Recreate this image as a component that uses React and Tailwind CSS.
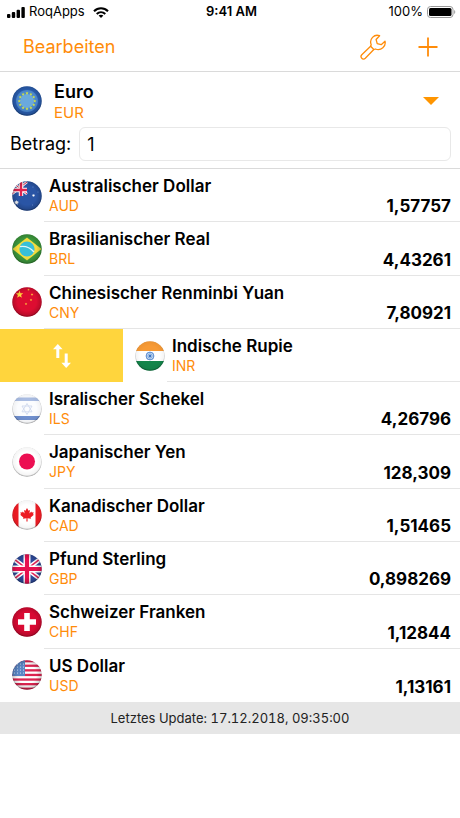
import React from "react";

const currencies = [
  { code: "AUD", name: "Australischer Dollar", rate: "1,57757" },
  { code: "BRL", name: "Brasilianischer Real", rate: "4,43261" },
  { code: "CNY", name: "Chinesischer Renminbi Yuan", rate: "7,80921" },
  { code: "INR", name: "Indische Rupie", swiped: true },
  { code: "ILS", name: "Isralischer Schekel", rate: "4,26796" },
  { code: "JPY", name: "Japanischer Yen", rate: "128,309" },
  { code: "CAD", name: "Kanadischer Dollar", rate: "1,51465" },
  { code: "GBP", name: "Pfund Sterling", rate: "0,898269" },
  { code: "CHF", name: "Schweizer Franken", rate: "1,12844" },
  { code: "USD", name: "US Dollar", rate: "1,13161" },
];

const starPath = (cx, cy, r, points = 5) => {
  let d = "";
  for (let i = 0; i < points * 2; i++) {
    const radius = i % 2 ? r * 0.42 : r;
    const a = (Math.PI * i) / points - Math.PI / 2;
    const x = (cx + radius * Math.cos(a)).toFixed(2);
    const y = (cy + radius * Math.sin(a)).toFixed(2);
    d += `${i ? "L" : "M"}${x} ${y}`;
  }
  return d + "Z";
};

const flagArt = {
  EUR: (
    <>
      <rect width="30" height="30" fill="#2a5fb2" />
      <circle cx="15" cy="15" r="11" fill="#4a86cc" />
      <circle cx="15" cy="15" r="7" fill="#6aa9dd" />
      {Array.from({ length: 12 }, (_, i) => (
        <path
          key={i}
          d={starPath(
            15 + 7.8 * Math.sin((i * Math.PI) / 6),
            15 - 7.8 * Math.cos((i * Math.PI) / 6),
            1.7
          )}
          fill="#d9e63c"
        />
      ))}
    </>
  ),
  AUD: (
    <>
      <rect width="30" height="30" fill="#2a55a5" />
      <path d="M0 1L15 13M15 1L0 13" stroke="#fff" strokeWidth="2.6" />
      <path d="M0 1L15 13M15 1L0 13" stroke="#e0244f" strokeWidth="1" />
      <path d="M9 0V15M0 9H15" stroke="#fff" strokeWidth="4.4" />
      <path d="M9 0V15M0 9H15" stroke="#e0244f" strokeWidth="2.4" />
      <path d={starPath(4.5, 21.5, 2.8, 7)} fill="#fff" />
      <path d={starPath(21.5, 14.5, 1.7, 7)} fill="#fff" />
      <path d={starPath(21, 6, 0.8, 7)} fill="#7f9fdb" />
      <path d={starPath(26, 11, 0.8, 7)} fill="#7f9fdb" />
      <path d={starPath(20.5, 24, 0.8, 7)} fill="#7f9fdb" />
    </>
  ),
  BRL: (
    <>
      <rect width="30" height="30" fill="#3d9a3d" />
      <path d="M.5 15L15 3.5L29.5 15L15 26.5Z" fill="#f4dc3e" />
      <circle cx="15" cy="15" r="7.6" fill="#38bfd8" />
      <path d="M8 12.6C13 11.8 18.5 14 22 18" stroke="#dff6fa" strokeWidth="1.4" fill="none" />
    </>
  ),
  CNY: (
    <>
      <rect width="30" height="30" fill="#dd0d31" />
      <path d={starPath(7.5, 7.5, 4)} fill="#ffd83a" />
      <path d={starPath(16.5, 2.8, 1.3)} fill="#ffc13a" />
      <path d={starPath(20, 7.5, 1.4)} fill="#ffc13a" />
      <path d={starPath(19, 13, 1.4)} fill="#ffc13a" />
      <path d={starPath(14, 17, 1.4)} fill="#ffc13a" />
    </>
  ),
  INR: (
    <>
      <rect width="30" height="30" fill="#fff" />
      <rect width="30" height="10" fill="#f79a35" />
      <rect y="20" width="30" height="10" fill="#13854a" />
      <circle cx="15" cy="15" r="3.9" fill="#c8dcf3" stroke="#5f8fd0" strokeWidth="1" />
      <path
        d="M15 11V19M11 15H19M12.2 12.2L17.8 17.8M17.8 12.2L12.2 17.8"
        stroke="#5f8fd0"
        strokeWidth=".6"
      />
      <circle cx="15" cy="15" r="1.2" fill="#3d73bf" />
    </>
  ),
  ILS: (
    <>
      <rect width="30" height="30" fill="#fbfcfe" />
      <rect y="3.5" width="30" height="3.5" fill="#a9bce2" />
      <rect y="22" width="30" height="4" fill="#6f8fce" />
      <path
        d="M15 20.5L10 12H20ZM15 9.5L20 17.8H10Z"
        fill="none"
        stroke="#d3dcef"
        strokeWidth="1"
      />
    </>
  ),
  JPY: (
    <>
      <rect width="30" height="30" fill="#fff" />
      <circle cx="15" cy="14.5" r="8" fill="#ec0f52" />
    </>
  ),
  CAD: (
    <>
      <rect width="30" height="30" fill="#fff" />
      <rect width="6.5" height="30" fill="#ec1c24" />
      <rect x="23.5" width="6.5" height="30" fill="#ec1c24" />
      <path
        d="M15 8l1.500 2.700 1.500-.8-.6 3.500 1.900-1.900.5 1 1.900-.3-.7 2 .9.5-3.300 2.800.4 1.300-3.500-.5.1 3.200h-1.200l.1-3.200-3.500.5.400-1.300-3.300-2.800.9-.5-.7-2 1.900.3.500-1 1.900 1.900-.6-3.500 1.500.8z"
        fill="#ec1c24"
      />
    </>
  ),
  GBP: (
    <>
      <rect width="30" height="30" fill="#2d4a9c" />
      <path d="M-2 2L32 28M32 2L-2 28" stroke="#fff" strokeWidth="4.6" />
      <path d="M-2 2L32 28M32 2L-2 28" stroke="#e2265a" strokeWidth="1.6" />
      <path d="M15 0V30M0 15H30" stroke="#fff" strokeWidth="7" />
      <path d="M15 0V30M0 15H30" stroke="#e5104f" strokeWidth="4.2" />
    </>
  ),
  CHF: (
    <>
      <rect width="30" height="30" fill="#d90a33" />
      <path d="M15 6V24M6 15H24" stroke="#fff" strokeWidth="5.6" />
    </>
  ),
  USD: (
    <>
      <rect width="30" height="30" fill="#fff" />
      {[0, 1, 2, 3, 4, 5, 6].map((i) => (
        <rect key={i} y={i * 4.6} width="30" height="2.3" fill="#dc2450" />
      ))}
      <rect width="13" height="16" fill="#5b86c4" />
      {[3, 6, 9, 12].map((y) =>
        [2.5, 5.5, 8.5, 11.5].map((x) => (
          <circle key={`${x}-${y}`} cx={x} cy={y + 1} r=".6" fill="#dbe6f5" />
        ))
      )}
    </>
  ),
};

const lightFlags = ["ILS", "JPY", "CAD", "INR"];

const Flag = ({ code }) => {
  const light = lightFlags.includes(code);

  return (
    <svg className="h-[30px] w-[30px] shrink-0" viewBox="0 0 30 30" aria-hidden="true">
      <defs>
        <clipPath id={`clip-${code}`}>
          <circle cx="15" cy="15" r="14.7" />
        </clipPath>
        <radialGradient id={`shade-${code}`} cx=".5" cy=".48" r=".52">
          <stop offset=".6" stopColor="#000" stopOpacity="0" />
          <stop offset=".88" stopColor="#000" stopOpacity={light ? 0.04 : 0.15} />
          <stop offset="1" stopColor="#000" stopOpacity={light ? 0.45 : 0.5} />
        </radialGradient>
      </defs>
      <g clipPath={`url(#clip-${code})`}>
        {flagArt[code]}
        <circle cx="15" cy="15" r="15" fill={`url(#shade-${code})`} />
      </g>
    </svg>
  );
};

const StatusBar = () => (
  <div className="grid h-6 grid-cols-3 items-center pl-[7px] pr-1 text-[13px]">
    <div className="flex items-center gap-1">
      <svg className="h-[11px] w-[18px]" viewBox="0 0 18 11" aria-hidden="true">
        <rect y="7" width="3.4" height="4" rx="1" />
        <rect x="4.8" y="5" width="3.4" height="6" rx="1" />
        <rect x="9.6" y="2.7" width="3.4" height="8.3" rx="1" />
        <rect x="14.4" width="3.4" height="11" rx="1" />
      </svg>
      <span>RoqApps</span>
      <svg className="ml-1 h-[11px] w-4" viewBox="0 0 16 11" aria-hidden="true">
        <path d="M1 4.2C5 .3 11 .3 15 4.2" fill="none" stroke="#000" strokeWidth="2.1" />
        <path d="M3.7 7C6.2 4.6 9.800 4.600 12.300 7" fill="none" stroke="#000" strokeWidth="2" />
        <path d="M8 11L5.6 8.6C7 7.3 9 7.3 10.4 8.6Z" />
      </svg>
    </div>
    <span className="text-center font-semibold">9:41 AM</span>
    <div className="flex items-center justify-end gap-1">
      <span>100%</span>
      <svg className="h-3 w-[29px]" viewBox="0 0 29 12" aria-hidden="true">
        <rect x=".5" y=".5" width="25.5" height="11" rx="3" fill="none" stroke="#999" />
        <rect x="2" y="2" width="22.5" height="8" rx="1.5" />
        <path d="M27.2 4C28.6 4.6 28.6 7.4 27.2 8Z" fill="#999" />
      </svg>
    </div>
  </div>
);

const Toolbar = () => (
  <header className="flex h-12 items-center border-b border-[#dadada] pb-px pl-[23px] pr-[22px] text-[#ff8c0a]">
    <button type="button" className="mr-auto text-lg">
      Bearbeiten
    </button>
    <button type="button" aria-label="Einstellungen" className="mr-8">
      <svg
        className="h-[26px] w-[26px]"
        viewBox="0 0 26 26"
        fill="none"
        stroke="currentColor"
        strokeWidth="1.3"
        strokeLinejoin="round"
        strokeLinecap="round"
      >
        <path d="M19.6 1.7C14.2-.2 8.9 5 11.2 10.7L10.6 12.3L1.8 20.7C-.4 23 2.8 26.7 5.3 24.3L13.8 15.5L15.4 15C21.2 17.2 26.2 12.2 25 7.2L21.2 10.7L17.2 9.6L16.1 5.5Z" />
        <path d="M10.6 12.3L13.8 15.5" />
      </svg>
    </button>
    <button type="button" aria-label="Hinzufügen">
      <svg
        className="h-5 w-5"
        viewBox="0 0 20 20"
        stroke="currentColor"
        strokeWidth="1.8"
      >
        <path d="M10 .5V19.5M.5 10H19.5" />
      </svg>
    </button>
  </header>
);

const BaseCurrency = () => (
  <section className="border-b border-[#dadada] pb-[7px]">
    <button type="button" className="flex w-full items-center gap-3 pb-[5px] pl-3 pr-[21px] pt-2 text-left">
      <Flag code="EUR" />
      <span className="flex flex-1 flex-col">
        <span className="text-lg leading-6 font-semibold">Euro</span>
        <span className="text-[15px] leading-[18px] text-[#ff8c0a]">EUR</span>
      </span>
      <svg className="h-2 w-4" viewBox="0 0 16 8" aria-hidden="true">
        <path d="M0 0H16L8 8Z" fill="#ff9500" />
      </svg>
    </button>
    <div className="flex items-center gap-2 pl-[10px] pr-[9px]">
      <label htmlFor="amount" className="text-lg">
        Betrag:
      </label>
      <input
        id="amount"
        type="text"
        inputMode="decimal"
        defaultValue="1"
        className="h-[34px] min-w-0 flex-1 rounded-md border border-[#e8e8e8] px-[7px] text-lg outline-none"
      />
    </div>
  </section>
);

const CurrencyRow = ({ code, name, rate, swiped }) => (
  <li className="group flex overflow-hidden">
    {swiped && (
      <button
        type="button"
        aria-label="Als Basis verwenden"
        className="flex w-[123px] shrink-0 items-center justify-center bg-[#ffd53d]"
      >
        <svg className="h-6 w-[18px]" viewBox="0 0 18 24" fill="#fff" aria-hidden="true">
          <path d="M4.8 0L9.6 5.2H6.3V14H3.3V5.2H0Z" />
          <path d="M13.2 24L8.4 18.8H11.7V9.5H14.7V18.8H18Z" />
        </svg>
      </button>
    )}
    <div className="flex w-full shrink-0 pl-3">
      <div className="flex w-8 items-center">
        <Flag code={code} />
      </div>
      <div className="flex flex-1 border-b border-[#e5e5e5] pl-[5px] pr-[9px] group-last:border-b-0">
        <div className="flex flex-1 flex-col pt-[7px]">
          <span className="text-[17px] leading-5 font-semibold">{name}</span>
          <span className="text-sm leading-5 text-[#ff8c0a]">{code}</span>
        </div>
        {rate && (
          <span className="self-end pb-[3px] text-[17px] leading-6 font-bold">{rate}</span>
        )}
      </div>
    </div>
  </li>
);

const App = () => {
  return (
    <div className="min-h-screen bg-white font-['Inter',sans-serif] text-black">
      <StatusBar />
      <Toolbar />
      <main>
        <BaseCurrency />
        <ul className="grid min-h-[533px] auto-rows-fr">
          {currencies.map((currency) => (
            <CurrencyRow key={currency.code} {...currency} />
          ))}
        </ul>
      </main>
      <footer className="bg-[#e6e6e6] py-[6px] text-center text-[13px] leading-5 text-[#222] tabular-nums">
        Letztes Update: 17.12.2018, 09:35:00
      </footer>
    </div>
  );
};

export default App;
